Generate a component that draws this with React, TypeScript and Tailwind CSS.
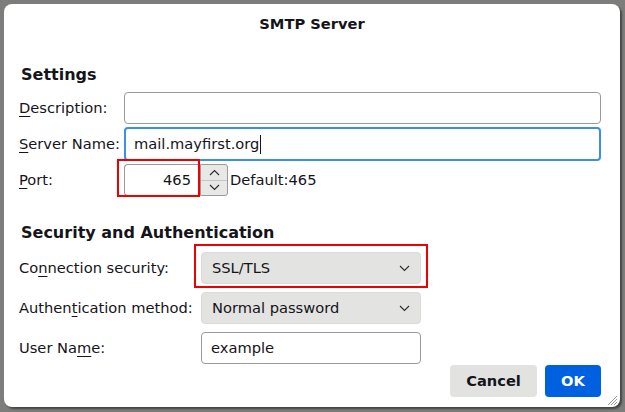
import React from 'react';

const font = { fontFamily: '"DejaVu Sans", Verdana, sans-serif' };

// Label with one underlined access key letter
const AccessLabel: React.FC<{ before?: string; accent: string; after: string }> = ({ before = '', accent, after }) => (
  <span className="text-[14.67px] text-[#15141a] whitespace-nowrap">
    {before}
    <span className="underline underline-offset-[3px] decoration-1">{accent}</span>
    {after}
  </span>
);

const Chevron: React.FC<{ up?: boolean; className?: string }> = ({ up, className }) => (
  <svg width="11" height="7" viewBox="0 0 11 7" className={className}>
    <polyline
      points={up ? '1,6 5.5,1.5 10,6' : '1,1 5.5,5.5 10,1'}
      fill="none"
      stroke="#2b2a33"
      strokeWidth="1.1"
    />
  </svg>
);

const SelectBox: React.FC<{ value: string }> = ({ value }) => (
  <div className="h-full w-full flex items-center justify-between rounded-[4px] bg-[#e3e4e1] border border-[#dadbd8] pl-[10px] pr-[10px]">
    <span className="text-[14.67px] text-[#15141a]">{value}</span>
    <Chevron />
  </div>
);

export default function App() {
  return (
    <div className="w-[625px] h-[412px] bg-[#7d7e7b] pt-[4px] pl-[4px] overflow-hidden" style={font}>
      <div className="relative w-[616px] h-[403px] bg-white rounded-[8px] shadow-[2px_2px_2px_rgba(0,0,0,0.45)] flex flex-col">
        <div className="h-[40px] flex items-center justify-center">
          <span className="text-[14.67px] font-bold text-[#15141a]">SMTP Server</span>
        </div>

        <div className="pl-[15px] pr-[19px]">
          <h2 className="mt-[21px] h-[20px] leading-[20px] ml-[2px] text-[16px] font-bold text-[#15141a]">Settings</h2>

          <div className="mt-[7px] grid grid-cols-[105px_1fr] gap-y-[4px] items-center">
            <AccessLabel accent="D" after="escription:" />
            <div className="h-[32px] rounded-[4px] border border-[#9a9a9a]" />

            <AccessLabel accent="S" after="erver Name:" />
            <div className="h-[34px] -my-px rounded-[4px] border-2 border-[#3a8fe8] flex items-center pl-[8px]">
              <span className="text-[14.67px] text-[#15141a]">mail.mayfirst.org</span>
              <span className="ml-[1px] w-px h-[19px] bg-[#15141a]" />
            </div>

            <AccessLabel accent="P" after="ort:" />
            <div className="flex items-center h-[32px]">
              <div className="relative h-full w-[76px]">
                <div className="h-full w-full rounded-l-[4px] border border-r-0 border-[#9a9a9a] flex items-center justify-end pr-[9px]">
                  <span className="text-[14.67px] text-[#15141a]">465</span>
                </div>
                <div className="absolute -left-[7px] -top-[5px] w-[83px] h-[38px] border-2 border-[#ee0000]" />
              </div>
              <div className="h-full w-[28px] flex flex-col border border-[#9a9a9a] rounded-r-[3px] bg-[#e8e8e6]">
                <div className="flex-1 flex items-center justify-center border-b border-[#c6c6c4]">
                  <Chevron up />
                </div>
                <div className="flex-1 flex items-center justify-center">
                  <Chevron />
                </div>
              </div>
              <span className="ml-[2px] text-[14.67px] text-[#15141a]">Default:465</span>
            </div>
          </div>

          <h2 className="mt-[27px] h-[20px] leading-[20px] ml-[2px] text-[16px] font-bold text-[#15141a]">
            Security and Authentication
          </h2>

          <div className="mt-[9px] grid grid-cols-[182px_220px] gap-y-[8px] items-center">
            <AccessLabel before="Co" accent="n" after="nection security:" />
            <div className="relative h-[32px]">
              <SelectBox value="SSL/TLS" />
              <div className="absolute -left-[7px] -top-[8px] w-[234px] h-[44px] border-2 border-[#ee0000]" />
            </div>

            <AccessLabel before="Authen" accent="t" after="ication method:" />
            <div className="h-[32px]">
              <SelectBox value="Normal password" />
            </div>

            <AccessLabel before="User Na" accent="m" after="e:" />
            <div className="h-[32px] rounded-[4px] border border-[#9a9a9a] flex items-center pl-[9px]">
              <span className="text-[14.67px] text-[#15141a]">example</span>
            </div>
          </div>
        </div>

        <div className="mt-auto pb-[10px] pr-[19px] flex justify-end gap-[8px]">
          <button className="h-[32px] w-[87px] rounded-[4px] bg-[#e2e3e0] text-[14.67px] font-bold text-[#15141a]">
            Cancel
          </button>
          <button className="h-[32px] w-[56px] rounded-[4px] bg-[#0061e0] text-[14.67px] font-bold text-white">
            OK
          </button>
        </div>

        {/* resize grip */}
        <svg className="absolute right-[2px] bottom-[1px]" width="11" height="11" viewBox="0 0 11 11">
          <line x1="10" y1="1" x2="1" y2="10" stroke="#9a9a9a" strokeWidth="1" />
          <line x1="10" y1="4" x2="4" y2="10" stroke="#9a9a9a" strokeWidth="1" />
          <line x1="10" y1="7" x2="7" y2="10" stroke="#9a9a9a" strokeWidth="1" />
        </svg>
      </div>
    </div>
  );
}
